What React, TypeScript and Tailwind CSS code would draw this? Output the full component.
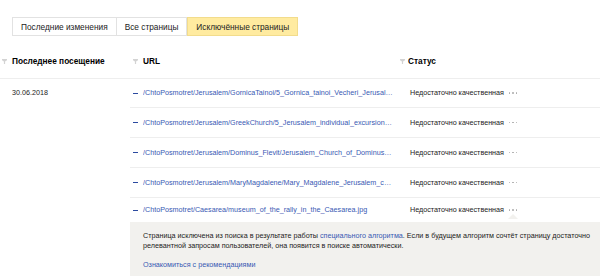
const tabs = [
  { label: "Последние изменения", active: false },
  { label: "Все страницы", active: false },
  { label: "Исключённые страницы", active: true },
];

const rows = [
  "/ChtoPosmotret/Jerusalem/GornicaTainoi/5_Gornica_tainoi_Vecheri_Jerusalem.jpg",
  "/ChtoPosmotret/Jerusalem/GreekChurch/5_Jerusalem_individual_excursion_tour.jpg",
  "/ChtoPosmotret/Jerusalem/Dominus_Flevit/Jerusalem_Church_of_Dominus_Flevit.jpg",
  "/ChtoPosmotret/Jerusalem/MaryMagdalene/Mary_Magdalene_Jerusalem_church.jpg",
  "/ChtoPosmotret/Caesarea/museum_of_the_rally_in_the_Caesarea.jpg",
];

const Funnel = () => (
  <svg width="5" height="5" viewBox="0 0 5 5" className="shrink-0">
    <path d="M0 0H5V1.2L3.1 2.6V5H1.9V2.6L0 1.2Z" fill="#d3d3d3" />
  </svg>
);

const Dots = ({ pointer }: { pointer: boolean }) => (
  <span className="relative ml-[5px] flex gap-[2px]">
    <span className="w-[1.5px] h-[1.5px] bg-[#aaa] rounded-full" />
    <span className="w-[1.5px] h-[1.5px] bg-[#aaa] rounded-full" />
    <span className="w-[1.5px] h-[1.5px] bg-[#aaa] rounded-full" />
    {pointer && (
      <span className="absolute left-[-1px] top-[5px] w-0 h-0 border-x-[5px] border-x-transparent border-b-[5px] border-b-[#f2f1ee]" />
    )}
  </span>
);

const App = () => {
  return (
    <div className="w-[600px] h-[276px] overflow-hidden bg-white text-[7.2px] leading-[10px] text-[#222] font-['Liberation_Sans',Arial,sans-serif]">
      {/* Tabs */}
      <div className="flex pt-[17px] pl-[12px] text-[8.3px]">
        {tabs.map((t, i) => (
          <div
            key={t.label}
            className={
              t.active
                ? "h-[19px] px-[8px] flex items-center border border-[#f2dc8c] bg-[#ffeba0]"
                : "h-[19px] px-[8px] flex items-center border border-[#e2e2e2] bg-white" +
                  (i > 0 ? " border-l-0" : "")
            }
          >
            {t.label}
          </div>
        ))}
      </div>

      {/* Header */}
      <div className="flex h-[43px] pt-[20px] border-b border-[#eeeeee] font-bold text-black text-[8.3px]">
        <div className="w-[130px] flex items-center pl-[2px] h-[10px]">
          <Funnel />
          <span className="ml-[5px]">Последнее посещение</span>
        </div>
        <div className="w-[270px] flex items-center pl-[3px] h-[10px]">
          <Funnel />
          <span className="ml-[5px]">URL</span>
        </div>
        <div className="flex items-center h-[10px]">
          <Funnel />
          <span className="ml-[3px]">Статус</span>
        </div>
      </div>

      {/* Body */}
      <div className="flex">
        <div className="w-[130px] pl-[12px] pt-[9px]">30.06.2018</div>
        <div className="flex-1">
          {rows.map((url, i) => (
            <div
              key={url}
              className={
                i === 0
                  ? "flex items-center h-[29px] border-b border-[#eeeeee]"
                  : i === rows.length - 1
                  ? "flex items-center h-[24px]"
                  : "flex items-center h-[30px] border-b border-[#eeeeee]"
              }
            >
              <div className="w-[270px] flex items-center pl-[3px]">
                <span className="w-[5px] h-[1px] bg-[#2b4aa0] shrink-0" />
                <span className="ml-[5px] w-[252px] truncate text-[#3859b3]">{url}</span>
              </div>
              <div className="flex items-center pl-[10px]">
                <span>Недостаточно качественная</span>
                <Dots pointer={i === rows.length - 1} />
              </div>
            </div>
          ))}
          <div className="bg-[#f2f1ee] h-[60px] pl-[13px] pr-[4px] pt-[9px]">
            <p>
              Страница исключена из поиска в результате работы{" "}
              <span className="text-[#3859b3]">специального алгоритма</span>. Если в будущем алгоритм
              сочтёт страницу достаточно релевантной запросам пользователей, она появится в поиске
              автоматически.
            </p>
            <p className="mt-[9px] text-[#3859b3]">Ознакомиться с рекомендациями</p>
          </div>
        </div>
      </div>
    </div>
  );
};

export default App;
